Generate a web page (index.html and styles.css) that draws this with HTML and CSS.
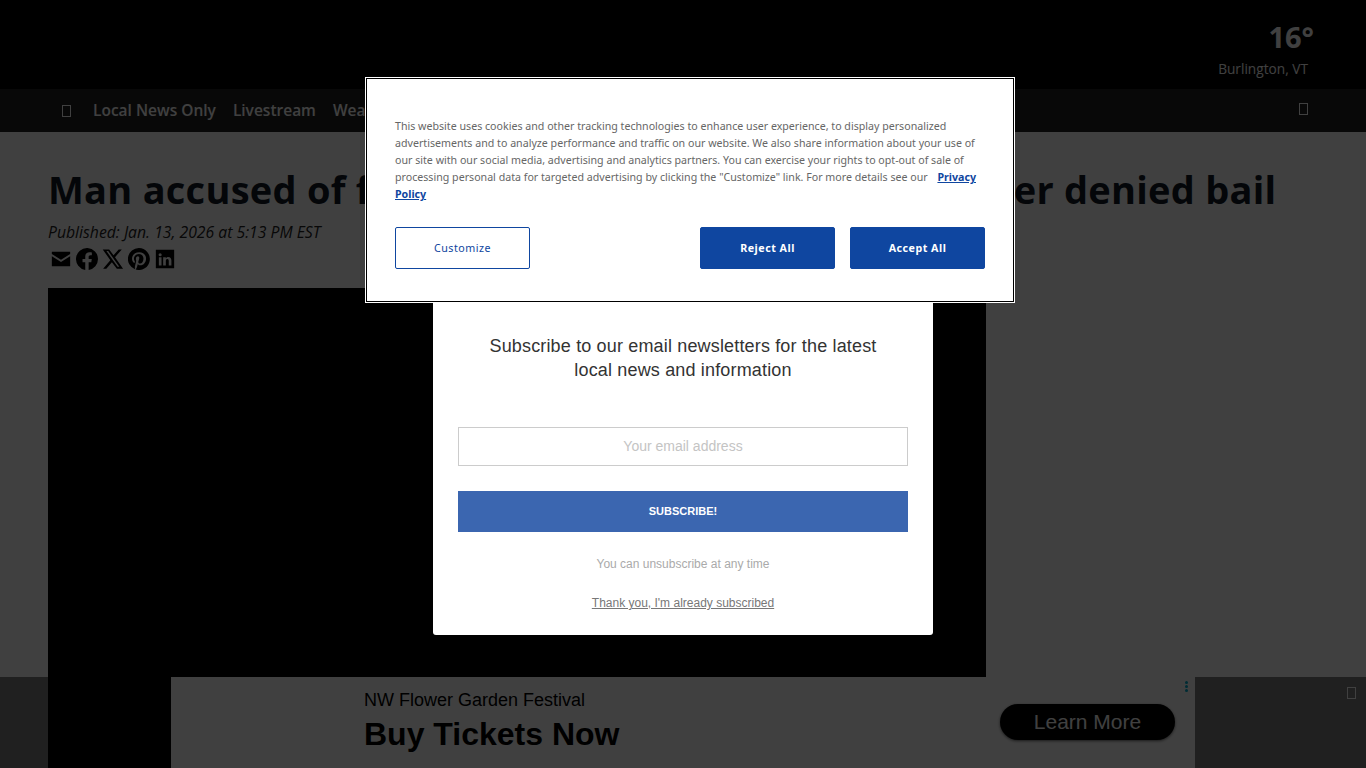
FILE: index.html
```html
<!DOCTYPE html>
<html lang="en">
<head>
    <meta charset="UTF-8">
    <meta name="viewport" content="width=device-width, initial-scale=1.0">
    <title>Man accused of fatally shooting a corrections officer denied bail</title>
    <link rel="stylesheet" href="styles.css">
</head>
<body>
    <header class="top-bar">
        <div class="weather">
            <div class="temp">16°</div>
            <div class="city">Burlington, VT</div>
        </div>
    </header>

    <nav class="main-nav">
        <span class="tofu"></span>
        <a href="#">Local News Only</a>
        <a href="#">Livestream</a>
        <a href="#">Weather</a>
        <span class="tofu nav-end"></span>
    </nav>

    <main class="article">
        <h1>Man accused of fatally shooting a corrections officer denied bail</h1>
        <p class="published">Published: Jan. 13, 2026 at 5:13 PM EST</p>
        <div class="share">
            <svg width="22" height="22" viewBox="0 0 24 24"><path d="M2 4h20v2.6l-10 6.2L2 6.600zM2 9l10 6.200L22 9v11H2z"/></svg>
            <svg width="22" height="22" viewBox="0 0 24 24"><path d="M24 12a12 12 0 1 0-13.900 11.900v-8.400H7.100V12h3V9.400c0-3 1.800-4.700 4.500-4.700 1.300 0 2.700.2 2.700.2v3h-1.500c-1.500 0-2 .9-2 1.900V12h3.400l-.5 3.500h-2.900v8.400A12 12 0 0 0 24 12z"/></svg>
            <svg width="22" height="22" viewBox="0 0 24 24"><path d="M18.200 1.500h3.400l-7.400 8.500L23 22.500h-6.800l-5.400-7-6.100 7H1.200l7.900-9.100L.8 1.500h7l4.800 6.400zm-1.200 19h1.900L6.800 3.400H4.800z"/></svg>
            <svg width="22" height="22" viewBox="0 0 24 24"><path d="M12 0a12 12 0 0 0-4.400 23.200c-.1-.9-.2-2.400 0-3.400l1.400-6s-.4-.7-.4-1.800c0-1.700 1-2.900 2.200-2.900 1 0 1.500.8 1.500 1.700 0 1-.7 2.600-1 4-.3 1.200.6 2.200 1.800 2.200 2.100 0 3.800-2.200 3.800-5.500 0-2.900-2.100-4.900-5-4.900-3.400 0-5.400 2.600-5.400 5.200 0 1 .4 2.100.9 2.700.1.100.1.200.1.300l-.3 1.400c-.1.200-.2.300-.4.200-1.500-.7-2.400-2.900-2.400-4.600 0-3.800 2.800-7.300 7.900-7.300 4.200 0 7.400 3 7.400 6.900 0 4.100-2.600 7.500-6.200 7.500-1.200 0-2.400-.6-2.800-1.400l-.8 2.900c-.3 1-1 2.300-1.500 3.100A12 12 0 1 0 12 0z"/></svg>
            <svg width="22" height="22" viewBox="0 0 24 24"><path d="M2 2h20v20H2zm3.300 8v9h2.900v-9zm1.400-4.400a1.700 1.700 0 1 0 0 3.400 1.700 1.700 0 0 0 0-3.400zM10 10v9h2.900v-4.700c0-1.200.4-2.200 1.700-2.200s1.500 1.100 1.500 2.300V19H19v-5.200c0-2.500-1.200-4-3.400-4-1.300 0-2.200.7-2.700 1.500V10z"/></svg>
        </div>
        <div class="video"></div>
    </main>

    <aside class="ad-bar">
        <div class="ad">
            <div class="ad-copy">
                <div class="ad-sub">NW Flower Garden Festival</div>
                <div class="ad-head">Buy Tickets Now</div>
            </div>
            <a class="ad-btn" href="#">Learn More</a>
            <span class="ad-dots"><i></i><i></i><i></i></span>
        </div>
        <span class="tofu ad-close"></span>
    </aside>

    <div class="overlay"></div>

    <section class="signup">
        <p class="signup-title">Subscribe to our email newsletters for the latest local news and information</p>
        <div class="signup-input">Your email address</div>
        <button class="signup-btn" type="button">SUBSCRIBE!</button>
        <p class="signup-note">You can unsubscribe at any time</p>
        <a class="signup-skip" href="#">Thank you, I'm already subscribed</a>
    </section>

    <section class="cookie">
        <p class="cookie-text">This website uses cookies and other tracking technologies to enhance user experience, to display personalized advertisements and to analyze performance and traffic on our website. We also share information about your use of our site with our social media, advertising and analytics partners. You can exercise your rights to opt-out of sale of processing personal data for targeted advertising by clicking the "Customize" link. For more details see our <a href="#">Privacy Policy</a></p>
        <div class="cookie-actions">
            <button class="btn-outline" type="button">Customize</button>
            <div class="cookie-right">
                <button class="btn-solid" type="button">Reject All</button>
                <button class="btn-solid" type="button">Accept All</button>
            </div>
        </div>
    </section>
</body>
</html>
```

FILE: styles.css
```css
* {
    box-sizing: border-box;
    margin: 0;
    padding: 0;
}

html, body {
    height: 768px;
    overflow: hidden;
}

body {
    font-family: "Open Sans", "Noto Sans", sans-serif;
    background-color: #fff;
    color: #111827;
}

a {
    color: inherit;
    text-decoration: none;
}

.tofu {
    display: inline-block;
    width: 9px;
    height: 12px;
    border: 1px solid currentColor;
}

/* header */
.top-bar {
    height: 89px;
    background-color: #000;
    display: flex;
    justify-content: flex-end;
    padding: 18px 52px 0 0;
}

.weather {
    color: #fff;
    text-align: right;
}

.temp {
    font-size: 29px;
    font-weight: 700;
    line-height: 38px;
}

.city {
    font-size: 13.700px;
    line-height: 20px;
    padding-right: 6px;
    margin-top: 3px;
}

.main-nav {
    height: 43px;
    background-color: #222;
    color: #fff;
    display: flex;
    align-items: center;
    gap: 17px;
    padding: 0 58px 2px 62px;
    font-size: 15.500px;
    font-weight: 600;
}

.main-nav .tofu {
    margin: 2px 5px 0 0;
}

.main-nav .nav-end {
    margin: -1px 0 0 auto;
}

/* article */
.article {
    padding: 33px 48px 0;
}

h1 {
    font-size: 38px;
    font-weight: 700;
    line-height: 48px;
    letter-spacing: 0.25px;
    white-space: nowrap;
}

.published {
    font-size: 15.750px;
    font-style: italic;
    line-height: 24px;
    margin-top: 7px;
    color: #222;
}

.share {
    display: flex;
    align-items: center;
    gap: 4px;
    height: 26px;
    margin: 2px 0 0 2px;
    color: #000;
}

.share svg {
    fill: currentColor;
}

.video {
    width: 938px;
    height: 480px;
    margin-top: 16px;
    background-color: #000;
}

/* bottom ad, see-through so the video shows beside it */
.ad-bar {
    position: fixed;
    left: 0;
    right: 0;
    bottom: 0;
    height: 91px;
    background-color: rgba(0, 0, 0, 0.5);
    display: flex;
    justify-content: center;
}

.ad {
    position: relative;
    width: 1024px;
    background-color: #fff;
    display: flex;
    align-items: center;
    justify-content: space-between;
    padding: 0 20px 2px 193px;
    font-family: "Liberation Sans", Arial, sans-serif;
    color: #000;
}

.ad-copy {
    margin-bottom: 2px;
}

.ad-sub {
    font-size: 18px;
    line-height: 22px;
}

.ad-head {
    font-size: 32px;
    font-weight: 700;
    line-height: 38px;
    margin-top: 4px;
}

.ad-btn {
    width: 175px;
    height: 36px;
    border-radius: 18px;
    background-color: #000;
    box-shadow: 0 1px 3px rgba(0, 0, 0, 0.6);
    color: #fff;
    font-size: 21px;
    line-height: 36px;
    text-align: center;
}

.ad-dots {
    position: absolute;
    top: 4px;
    right: 7px;
    display: flex;
    flex-direction: column;
    gap: 1px;
}

.ad-dots i {
    width: 3px;
    height: 3px;
    border-radius: 50%;
    background-color: #00aecd;
}

.ad-close {
    position: absolute;
    top: 10px;
    right: 10px;
    color: #fff;
}

/* overlay and popups */
.overlay {
    position: fixed;
    inset: 0;
    background-color: rgba(0, 0, 0, 0.75);
}

.signup {
    position: fixed;
    left: 433px;
    top: 290px;
    width: 500px;
    height: 345px;
    background-color: #fff;
    border-radius: 3px;
    padding: 44px 25px 0;
    font-family: "Liberation Sans", Arial, sans-serif;
    text-align: center;
}

.signup-title {
    font-size: 18px;
    line-height: 24px;
    letter-spacing: 0.16px;
    color: #333;
    padding: 0 25px;
}

.signup-input {
    height: 39px;
    margin-top: 45px;
    border: 1px solid #ccc;
    color: #c4c4c4;
    font-size: 14px;
    line-height: 37px;
}

.signup-btn {
    display: block;
    width: 100%;
    height: 41px;
    margin-top: 25px;
    padding-bottom: 2px;
    border: none;
    background-color: #3b66b0;
    color: #fff;
    font-family: inherit;
    font-size: 11px;
    font-weight: 700;
}

.signup-note {
    margin-top: 25px;
    font-size: 12px;
    line-height: 14px;
    color: #aaa;
}

.signup-skip {
    display: inline-block;
    margin-top: 25px;
    font-size: 12px;
    line-height: 14px;
    color: #777;
    text-decoration: underline;
}

.cookie {
    position: fixed;
    left: 366px;
    top: 78px;
    width: 648px;
    height: 224px;
    background-color: #fff;
    border: 1px solid #000;
    outline: 1px solid #fff;
    padding: 39px 28px 0;
}

.cookie-text {
    font-family: "Noto Sans", sans-serif;
    font-size: 10.650px;
    line-height: 17px;
    color: #666;
}

.cookie-text a {
    color: #0f46a0;
    font-weight: 700;
    text-decoration: underline;
    margin-left: 7px;
}

.cookie-actions {
    display: flex;
    justify-content: space-between;
    margin-top: 24px;
}

.cookie-right {
    display: flex;
    gap: 15px;
}

.cookie-actions button {
    width: 135px;
    height: 42px;
    border-radius: 2px;
    font-family: "Noto Sans", sans-serif;
    font-size: 10.700px;
    letter-spacing: 0.5px;
}

.btn-outline {
    background-color: #fff;
    border: 1px solid #0f46a0;
    color: #0f46a0;
}

.btn-solid {
    background-color: #0f46a0;
    border: 1px solid #0f46a0;
    color: #fff;
    font-weight: 700;
}
```
